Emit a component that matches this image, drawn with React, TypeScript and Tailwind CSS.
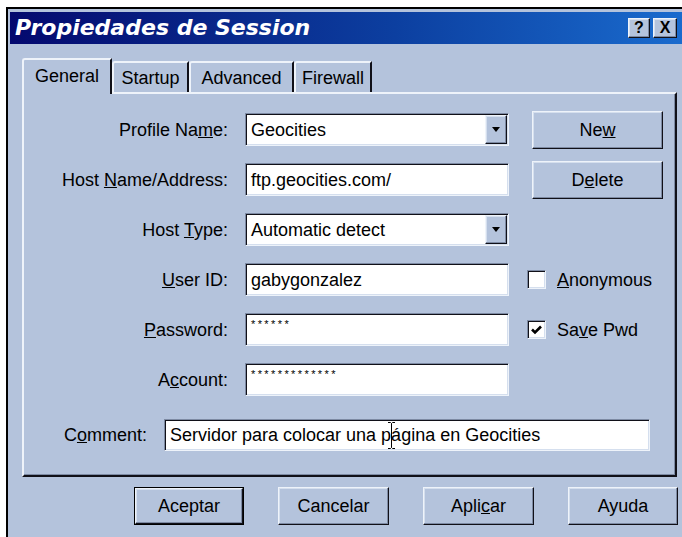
import React from 'react'

// Win2000-style 3D edges on a blue-grey dialog face
const RAISED =
  'border border-t-[#eef3fa] border-l-[#eef3fa] border-r-[#101018] border-b-[#101018] shadow-[inset_-1px_-1px_0_#7d8aa3,inset_1px_1px_0_#d5dfee]'
const SUNKEN =
  'border border-t-[#7d8aa3] border-l-[#7d8aa3] border-r-[#eef3fa] border-b-[#eef3fa] shadow-[inset_1px_1px_0_#101018,inset_-1px_-1px_0_#d5dfee] bg-white'

function Label({ children, width }: { children: React.ReactNode; width: string }) {
  return <div className={`${width} shrink-0 text-right leading-none`}>{children}</div>
}

function TextField({ value, small }: { value: string; small?: boolean }) {
  return (
    <div className={`${SUNKEN} w-[264px] h-[33px] flex items-center pl-[5px]`}>
      {small ? (
        <span className="text-[11px] tracking-[2.4px] self-start pt-[5px] leading-none">{value}</span>
      ) : (
        <span className="leading-none">{value}</span>
      )}
    </div>
  )
}

function Combo({ value }: { value: string }) {
  return (
    <div className={`${SUNKEN} relative w-[264px] h-[33px] flex items-center pl-[5px]`}>
      <span className="leading-none">{value}</span>
      <div
        className={`${RAISED} absolute right-[1px] top-[1px] bottom-[1px] w-[22px] bg-[#b4c3dc] flex items-center justify-center`}
      >
        <svg width="8" height="5" viewBox="0 0 8 5">
          <path d="M0 0h8L4 5z" fill="#000" />
        </svg>
      </div>
    </div>
  )
}

function Button({ children, w, isDefault }: { children: React.ReactNode; w: string; isDefault?: boolean }) {
  const inner = (
    <div className={`${RAISED} ${isDefault ? 'w-full h-full' : `${w} h-[38px]`} bg-[#b4c3dc] flex items-center justify-center leading-none`}>
      {children}
    </div>
  )
  if (!isDefault) return inner
  return <div className={`${w} h-[38px] border border-black`}>{inner}</div>
}

function Checkbox({ checked, children }: { checked?: boolean; children: React.ReactNode }) {
  return (
    <div className="flex items-center gap-[11px]">
      <div className={`${SUNKEN} w-[19px] h-[19px] flex items-center justify-center`}>
        {checked && (
          <svg width="11" height="10" viewBox="0 0 11 10">
            <path d="M1 4.5l3 3L10 1.5" stroke="#000" strokeWidth="2.6" fill="none" />
          </svg>
        )}
      </div>
      <span className="leading-none">{children}</span>
    </div>
  )
}

const tabs = [
  { name: 'General', w: 'w-[90px]' },
  { name: 'Startup', w: 'w-[77px]' },
  { name: 'Advanced', w: 'w-[105px]' },
  { name: 'Firewall', w: 'w-[78px]' },
]

export default function App() {
  return (
    <div className="w-[682px] h-[537px] bg-white overflow-hidden font-['Liberation_Sans',Arial,sans-serif] text-[18px] text-black">
      <div className="ml-[6px] mt-[7px] w-[700px] h-[540px] border-l-2 border-t-2 border-black bg-[#b4c3dc] pl-[2px] pt-[3px]">
        {/* caption */}
        <div className="h-[32px] w-[700px] flex items-center bg-[linear-gradient(90deg,#04096e_0%,#0c3fa0_55%,#1b6fd2_100%)] pl-[5px]">
          <span className="w-[300px] font-['DejaVu_Sans',Verdana,sans-serif] italic font-bold text-[22px] text-white leading-none">
            Propiedades de Session
          </span>
          <div className="ml-[313px] flex gap-[3px]">
            <div className={`${RAISED} w-[22px] h-[20px] bg-[#b4c3dc] flex items-center justify-center font-bold text-[16px] leading-none`}>
              ?
            </div>
            <div className={`${RAISED} w-[24px] h-[20px] bg-[#b4c3dc] flex items-center justify-center font-bold text-[16px] leading-none`}>
              X
            </div>
          </div>
        </div>

        <div className="pl-[12px]">
          {/* tab strip */}
          <div className="mt-[14px] h-[34px] flex items-end">
            {tabs.map((t, i) =>
              i === 0 ? (
                <div
                  key={t.name}
                  className={`${t.w} h-[36px] -mb-[2px] relative z-10 bg-[#b4c3dc] border-l-2 border-t-2 border-l-[#eef3fa] border-t-[#eef3fa] border-r-2 border-r-[#101018] rounded-tl-[3px] flex items-center justify-center pb-[2px] leading-none`}
                >
                  {t.name}
                </div>
              ) : (
                <div
                  key={t.name}
                  className={`${t.w} h-[31px] border-l-2 border-t-2 border-l-[#eef3fa] border-t-[#eef3fa] border-r-2 border-r-[#101018] rounded-tl-[3px] flex items-center justify-center leading-none`}
                >
                  {t.name}
                </div>
              )
            )}
          </div>

          {/* tab page */}
          <div className="w-[655px] h-[385px] border-2 border-t-[#eef3fa] border-l-[#eef3fa] border-r-[#101018] border-b-[#101018] shadow-[inset_-1px_-1px_0_#7d8aa3] pt-[19px]">
            <div className="flex flex-col gap-[17px]">
              <div className="h-[33px] flex items-center">
                <Label width="w-[204px]">
                  Profile Na<u>m</u>e:
                </Label>
                <div className="ml-[17px]">
                  <Combo value="Geocities" />
                </div>
                <div className="ml-[23px]">
                  <Button w="w-[131px]">
                    Ne<u>w</u>
                  </Button>
                </div>
              </div>
              <div className="h-[33px] flex items-center">
                <Label width="w-[204px]">
                  Host <u>N</u>ame/Address:
                </Label>
                <div className="ml-[17px]">
                  <TextField value="ftp.geocities.com/" />
                </div>
                <div className="ml-[23px]">
                  <Button w="w-[131px]">
                    D<u>e</u>lete
                  </Button>
                </div>
              </div>
              <div className="h-[33px] flex items-center">
                <Label width="w-[204px]">
                  Host <u>T</u>ype:
                </Label>
                <div className="ml-[17px]">
                  <Combo value="Automatic detect" />
                </div>
              </div>
              <div className="h-[33px] flex items-center">
                <Label width="w-[204px]">
                  <u>U</u>ser ID:
                </Label>
                <div className="ml-[17px]">
                  <TextField value="gabygonzalez" />
                </div>
                <div className="ml-[18px]">
                  <Checkbox>
                    <u>A</u>nonymous
                  </Checkbox>
                </div>
              </div>
              <div className="h-[33px] flex items-center">
                <Label width="w-[204px]">
                  <u>P</u>assword:
                </Label>
                <div className="ml-[17px]">
                  <TextField value="******" small />
                </div>
                <div className="ml-[18px]">
                  <Checkbox checked>
                    Sa<u>v</u>e Pwd
                  </Checkbox>
                </div>
              </div>
              <div className="h-[33px] flex items-center">
                <Label width="w-[204px]">
                  A<u>c</u>count:
                </Label>
                <div className="ml-[17px]">
                  <TextField value="*************" small />
                </div>
              </div>
            </div>

            <div className="mt-[23px] h-[32px] flex items-center">
              <Label width="w-[123px]">
                C<u>o</u>mment:
              </Label>
              <div className={`${SUNKEN} relative ml-[17px] w-[486px] h-[32px] flex items-center pl-[5px]`}>
                <span className="leading-none">Servidor para colocar una página en Geocities</span>
                {/* I-beam pointer */}
                <svg className="absolute left-[223px] top-[2px]" width="7" height="27" viewBox="0 0 7 27">
                  <path d="M0 0.5h2.5l1 1 1-1H7M3.5 1.5v24M0 26.5h2.5l1-1 1 1H7" stroke="#000" strokeWidth="1" fill="none" />
                </svg>
              </div>
            </div>
          </div>

          {/* dialog buttons */}
          <div className="mt-[10px] flex pl-[112px] gap-[34px]">
            <Button w="w-[110px]" isDefault>
              Aceptar
            </Button>
            <Button w="w-[111px]">Cancelar</Button>
            <Button w="w-[111px]">
              Apli<u>c</u>ar
            </Button>
            <Button w="w-[110px]">Ayuda</Button>
          </div>
        </div>
      </div>
    </div>
  )
}
